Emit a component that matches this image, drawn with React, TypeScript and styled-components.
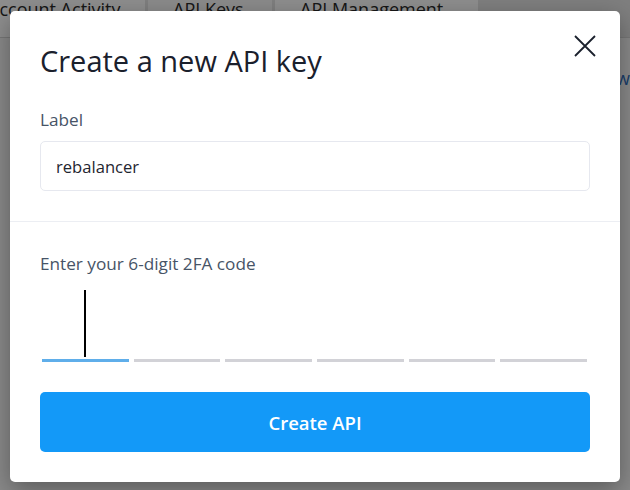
import React, { FC } from 'react'
import styled, { createGlobalStyle } from 'styled-components'

const GlobalStyle = createGlobalStyle`
  * {
    box-sizing: border-box;
  }
  body {
    margin: 0;
    font-family: 'Open Sans', 'Noto Sans', sans-serif;
    background: #f8f8f8;
  }
`

const SCREEN = styled.div`
  position: relative;
  width: 630px;
  height: 490px;
  overflow: hidden;
  background: #f8f8f8;
`

const TAB_BAR = styled.div`
  display: flex;
  gap: 3px;
  height: 38px;
  margin-left: -37px;
  background: #e4e4e4;
  border-bottom: 1px solid #d6d6d6;
`

const TAB = styled.div<{ w: number; active?: boolean }>`
  flex: 0 0 ${({ w }) => w}px;
  padding-left: 25px;
  background: ${({ active }) => (active ? '#fafafa' : '#ffffff')};
  color: #2a2a2a;
  font-size: 18px;
  line-height: 19px;
  white-space: nowrap;
  overflow: hidden;
`

const TOOL_ROW = styled.div`
  display: flex;
  justify-content: flex-end;
  padding-top: 28px;
`

const LINK = styled.span`
  color: #2f6fc0;
  font-size: 18px;
  line-height: 24px;
`

const OVERLAY = styled.div`
  position: absolute;
  inset: 0;
  display: flex;
  justify-content: center;
  align-items: flex-start;
  padding-top: 11px;
  background: rgba(0, 0, 0, 0.443);
`

const MODAL = styled.div`
  width: 610px;
  background: #ffffff;
  border-radius: 5px;
  box-shadow: 0 8px 26px rgba(0, 0, 0, 0.35);
`

const SECTION = styled.div<{ divider?: boolean }>`
  display: flex;
  flex-direction: column;
  padding: 30px;
  border-top: ${({ divider }) => (divider ? '1px solid #eceef3' : 'none')};
`

const HEADER = styled.div`
  display: flex;
  justify-content: space-between;
  align-items: flex-start;
  margin-bottom: 27px;
`

const TITLE = styled.h2`
  margin: 0;
  font-size: 29px;
  line-height: 40px;
  font-weight: 400;
  color: #1a202c;
`

const CLOSE = styled.button`
  display: flex;
  margin: -6px -6px 0 0;
  padding: 0;
  border: none;
  background: none;
  cursor: pointer;
`

const FIELD_LABEL = styled.label`
  font-size: 17.2px;
  line-height: 24px;
  font-weight: 500;
  color: #475467;
`

const TEXT_INPUT = styled.div`
  display: flex;
  align-items: center;
  height: 50px;
  margin-top: 9px;
  padding: 0 15px;
  border: 1px solid #e6e8ef;
  border-radius: 5px;
  font-size: 16.6px;
  color: #1f2630;
`

const CODE_ROW = styled.div`
  display: grid;
  grid-template-columns: repeat(6, 1fr);
  gap: 5px;
  margin-top: 14px;
  padding: 0 3px 0 2px;
`

const CODE_CELL = styled.div<{ active?: boolean }>`
  display: flex;
  justify-content: center;
  align-items: flex-end;
  height: 72px;
  padding-bottom: 2px;
  border-bottom: 3px solid ${({ active }) => (active ? '#5faeea' : '#d2d2d7')};
`

const CARET = styled.span`
  width: 2px;
  height: 67px;
  background: #000000;
`

const SUBMIT = styled.button`
  height: 60px;
  margin-top: 30px;
  border: none;
  border-radius: 5px;
  background: #1399f8;
  color: #ffffff;
  font-family: 'Open Sans', 'Noto Sans', sans-serif;
  font-size: 18.5px;
  font-weight: 600;
  cursor: pointer;
`

const CloseIcon: FC = () => (
  <svg width="22" height="22" viewBox="0 0 22 22" fill="none">
    <path d="M1 1L21 21M21 1L1 21" stroke="#1a202c" strokeWidth="1.8" />
  </svg>
)

const App: FC = () => {
  return (
    <SCREEN>
      <GlobalStyle />
      <TAB_BAR>
        <TAB w={182}>Account Activity</TAB>
        <TAB w={124} active>
          API Keys
        </TAB>
        <TAB w={203}>API Management</TAB>
      </TAB_BAR>
      <TOOL_ROW>
        <LINK>New</LINK>
      </TOOL_ROW>

      <OVERLAY>
        <MODAL>
          <SECTION>
            <HEADER>
              <TITLE>Create a new API key</TITLE>
              <CLOSE aria-label="Close">
                <CloseIcon />
              </CLOSE>
            </HEADER>
            <FIELD_LABEL>Label</FIELD_LABEL>
            <TEXT_INPUT>rebalancer</TEXT_INPUT>
          </SECTION>
          <SECTION divider>
            <FIELD_LABEL>Enter your 6-digit 2FA code</FIELD_LABEL>
            <CODE_ROW>
              {[0, 1, 2, 3, 4, 5].map((i) => (
                <CODE_CELL key={i} active={i === 0}>
                  {i === 0 && <CARET />}
                </CODE_CELL>
              ))}
            </CODE_ROW>
            <SUBMIT>Create API</SUBMIT>
          </SECTION>
        </MODAL>
      </OVERLAY>
    </SCREEN>
  )
}

export default App
